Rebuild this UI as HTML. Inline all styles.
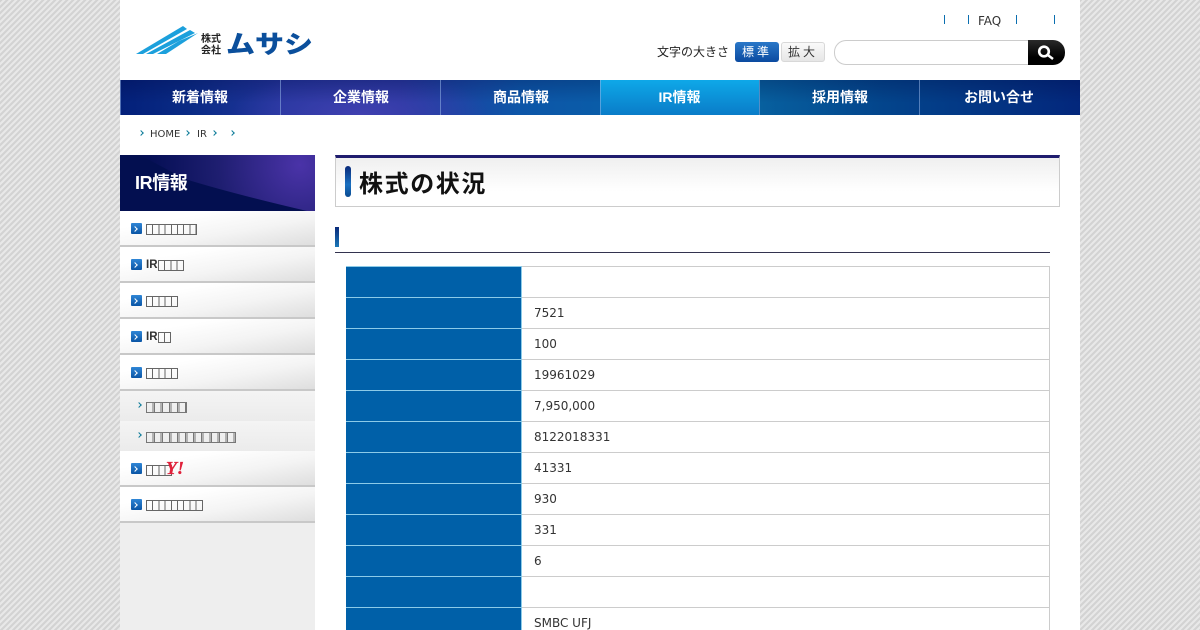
<!DOCTYPE html>
<html lang="ja"><head><meta charset="utf-8"><title>株式の状況</title>
<style>
html,body{margin:0;padding:0}
body{width:1200px;height:630px;overflow:hidden;position:relative;font-family:"DejaVu Sans",sans-serif;color:#333;
background:repeating-linear-gradient(135deg,#d3d3d3 0,#d3d3d3 2.12px,#e8e8e8 2.12px,#e8e8e8 4.24px)}
#w,#w div,#w span.a,#w svg{position:absolute}
#w{left:120px;top:0;width:960px;height:630px;background:#fff;overflow:hidden}
.cjk{font-family:"Liberation Sans","Noto Sans CJK JP",sans-serif}
.nav{top:80px;height:35px;line-height:34px;text-align:center;color:#fff;font-size:14px;font-weight:bold;font-family:"Liberation Sans","Noto Sans CJK JP",sans-serif}
.sep{top:80px;width:1px;height:35px;background:rgba(150,180,230,.55)}
.tick{top:15px;width:1px;height:9px;background:#0b6fb0}
.crumb{top:129px;font-size:10px;line-height:12px;color:#333}
.item{left:0;width:195px;height:34px;background:linear-gradient(170deg,#fff 25%,#f4f4f4 60%,#dedede 100%);border-bottom:2px solid #c8c8c8}
.sub{left:0;width:195px;height:30px;background:linear-gradient(#f4f4f4,#ebebeb);border-bottom:1px solid #ddd}
.ic{left:11px;width:11px;height:11px;background:linear-gradient(#2f86d6,#0a55a5);border-radius:1px;color:#fff}
.ic:after{content:"";position:absolute;left:2px;top:3.5px;width:3px;height:3px;border:solid #fff;border-width:1.5px 1.5px 0 0;transform:rotate(45deg)}
.tf{height:11px;border:1px solid #666;box-sizing:border-box;background:repeating-linear-gradient(90deg,transparent 0,transparent 5.2px,#666 5.2px,#666 6.2px)}
.tf2{height:11px;border:1px solid #777;box-sizing:border-box;background:repeating-linear-gradient(90deg,transparent 0,transparent 5.6px,#777 5.6px,#777 6.6px,transparent 6.6px,transparent 7.1px,#777 7.1px,#777 8.1px)}
.ir{font-size:11.5px;font-weight:bold;line-height:14px;color:#333;left:26px;font-family:"Liberation Sans",sans-serif}
.th{left:226px;width:175px;height:30px;background:#0060a8;border-top:1px solid #8ccbe8;border-right:1px solid #8ccbe8}
.td{left:402px;width:527px;height:30px;border-top:1px solid #ccc;border-right:1px solid #ccc;font-size:12px;line-height:30px;text-indent:12px;color:#333}
.ch{width:3px;height:3px;border:solid #0a7a98;border-width:1.6px 1.6px 0 0;transform:rotate(45deg)}
</style></head><body>
<div id="w">
<!-- logo -->
<svg style="left:15px;top:24px" width="180" height="34" viewBox="0 0 180 34">
<polygon points="1,30 48,2 52,5 8,30" fill="#1ca0dc"/>
<polygon points="11,30 55,6 60,9 18,30" fill="#1ca0dc"/>
<polygon points="22,30 44,17 63,9 31,30" fill="#1ca0dc"/>
<text x="66" y="18" font-size="10" font-weight="bold" fill="#222" font-family="Noto Sans CJK JP,sans-serif">株式</text>
<text x="66" y="29.5" font-size="10" font-weight="bold" fill="#222" font-family="Noto Sans CJK JP,sans-serif">会社</text>
<text x="91" y="29" font-size="25" font-weight="900" fill="#0b4f9c" font-family="Noto Sans CJK JP,sans-serif" textLength="87" lengthAdjust="spacingAndGlyphs">ムサシ</text>
</svg>
<div class="tick" style="left:824px"></div><div class="tick" style="left:848px"></div><div class="tick" style="left:896px"></div><div class="tick" style="left:934px"></div>
<div style="left:858px;top:14px;font-size:12px;line-height:15px;color:#333">FAQ</div>
<div class="cjk" style="left:537px;top:43px;font-size:12px;line-height:18px;color:#222">文字の大きさ</div>
<div class="cjk" style="left:615px;top:42px;width:44px;height:20px;border-radius:3px;background:linear-gradient(#2a78c8,#0b4aa0);color:#fff;font-size:12px;line-height:20px;text-align:center;letter-spacing:3px">標準</div>
<div class="cjk" style="left:661px;top:42px;width:42px;height:18px;border:1px solid #d8d8d8;border-radius:3px;background:linear-gradient(#fafafa,#e6e6e6);color:#333;font-size:12px;line-height:19px;text-align:center;letter-spacing:3px">拡大</div>
<div style="left:714px;top:40px;width:194px;height:23px;border:1px solid #ccc;border-right:0;border-radius:12px 0 0 12px;background:#fff"></div>
<div style="left:908px;top:40px;width:37px;height:25px;background:linear-gradient(#2a2a2a,#000 70%);border-radius:0 12px 12px 0"></div>
<svg style="left:917px;top:44px" width="20" height="18" viewBox="0 0 20 18"><circle cx="7" cy="7.5" r="4.8" fill="none" stroke="#fff" stroke-width="2.6"/><path d="M10.8 11L16 15" stroke="#fff" stroke-width="2.4"/></svg>
<!-- nav -->
<div style="left:0;top:80px;width:960px;height:35px;background:linear-gradient(rgba(0,0,50,.22),rgba(0,0,50,0) 65%),radial-gradient(ellipse 130px 45px at 240px 35px,#4040b0 0,rgba(64,64,176,0) 100%),linear-gradient(90deg,#03207a 0,#0a2b85 70px,#22359c 160px,#24379e 280px,#0d56a8 400px,#0a5ca8 480px,#07609f 640px,#03458c 760px,#03277c 960px)"></div>
<div style="left:480px;top:80px;width:159px;height:35px;background:linear-gradient(#0ea8e8,#0a7cc8)"></div>
<div class="sep" style="left:0"></div><div class="sep" style="left:160px"></div><div class="sep" style="left:320px"></div><div class="sep" style="left:480px"></div><div class="sep" style="left:639px"></div><div class="sep" style="left:799px"></div>
<div class="nav" style="left:0;width:160px">新着情報</div>
<div class="nav" style="left:161px;width:160px">企業情報</div>
<div class="nav" style="left:321px;width:160px">商品情報</div>
<div class="nav" style="left:480px;width:159px">IR情報</div>
<div class="nav" style="left:640px;width:160px">採用情報</div>
<div class="nav" style="left:799px;width:160px">お問い合せ</div>
<!-- breadcrumb -->
<div class="ch" style="left:19px;top:131px"></div><div class="crumb" style="left:30px">HOME</div>
<div class="ch" style="left:65px;top:131px"></div><div class="crumb" style="left:77px">IR</div>
<div class="ch" style="left:92px;top:131px"></div>
<div class="ch" style="left:110px;top:131px"></div>
<!-- sidebar -->
<div style="left:0;top:155px;width:195px;height:475px;background:#eee"></div>
<svg style="left:0;top:155px" width="195" height="56" viewBox="0 0 195 56"><defs><radialGradient id="g" cx="180" cy="10" r="150" gradientUnits="userSpaceOnUse"><stop offset="0" stop-color="#4a33a8"/><stop offset=".55" stop-color="#1e1e70"/><stop offset="1" stop-color="#050f55"/></radialGradient></defs><rect width="195" height="56" fill="#030f50"/><path d="M20 0H195V56H187Q110 38 65 24Z" fill="url(#g)"/></svg>
<div class="cjk" style="left:15px;top:170px;font-size:18px;line-height:26px;color:#fff;font-weight:bold;letter-spacing:-.4px">IR情報</div>

<div class="item" style="top:211px"></div><div class="ic" style="top:223px"></div><div class="tf" style="left:26px;top:224px;width:50.6px"></div>
<div class="item" style="top:247px"></div><div class="ic" style="top:259px"></div><div class="ir" style="top:258px">IR</div><div class="tf" style="left:38px;top:260px;width:25.8px"></div>
<div class="item" style="top:283px"></div><div class="ic" style="top:295px"></div><div class="tf" style="left:26px;top:296px;width:32px"></div>
<div class="item" style="top:319px"></div><div class="ic" style="top:331px"></div><div class="ir" style="top:330px">IR</div><div class="tf" style="left:38px;top:332px;width:13.4px"></div>
<div class="item" style="top:355px"></div><div class="ic" style="top:367px"></div><div class="tf" style="left:26px;top:368px;width:32px"></div>
<div class="sub" style="top:391px"></div><div class="ch" style="left:17px;top:403px"></div><div class="tf2" style="left:26px;top:402px;width:40.5px"></div>
<div class="sub" style="top:421px"></div><div class="ch" style="left:17px;top:433px"></div><div class="tf2" style="left:26px;top:432px;width:89.6px"></div>
<div class="item" style="top:451px"></div><div class="ic" style="top:463px"></div><div class="tf" style="left:26px;top:465px;width:25.8px"></div>
<div style="left:46px;top:459px;font-family:'Liberation Serif',serif;font-style:italic;font-weight:bold;font-size:18px;line-height:18px;color:#e0203a;-webkit-text-stroke:.3px #e0203a">Y!</div>
<div class="item" style="top:487px"></div><div class="ic" style="top:499px"></div><div class="tf" style="left:26px;top:500px;width:56.8px"></div>
<!-- heading -->
<div style="left:215px;top:155px;width:723px;height:48px;border:1px solid #ccc;border-top:3px solid #1f1c6e;background:linear-gradient(#efefef,#fff 70%)"></div>
<div style="left:225px;top:166px;width:6px;height:31px;border-radius:3px;background:linear-gradient(#0a2a7a,#1a70c0 60%,#0a4a90)"></div>
<div style="left:239px;top:165px;font-family:'Noto Sans CJK JP',sans-serif;font-weight:bold;font-size:24px;line-height:34px;letter-spacing:1.6px;color:#111">株式の状況</div>
<div style="left:215px;top:227px;width:4px;height:20px;background:linear-gradient(#0a2a7a,#1a78b8)"></div>
<div style="left:215px;top:252px;width:715px;height:1px;background:#33334f"></div>
<!-- table -->
<div class="th" style="top:266px"></div><div class="td" style="top:266px"></div>
<div class="th" style="top:297px"></div><div class="td" style="top:297px">7521</div>
<div class="th" style="top:328px"></div><div class="td" style="top:328px">100</div>
<div class="th" style="top:359px"></div><div class="td" style="top:359px">19961029</div>
<div class="th" style="top:390px"></div><div class="td" style="top:390px">7,950,000</div>
<div class="th" style="top:421px"></div><div class="td" style="top:421px">8122018331</div>
<div class="th" style="top:452px"></div><div class="td" style="top:452px">41331</div>
<div class="th" style="top:483px"></div><div class="td" style="top:483px">930</div>
<div class="th" style="top:514px"></div><div class="td" style="top:514px">331</div>
<div class="th" style="top:545px"></div><div class="td" style="top:545px">6</div>
<div class="th" style="top:576px"></div><div class="td" style="top:576px"></div>
<div class="th" style="top:607px"></div><div class="td" style="top:607px">SMBC UFJ</div>
</div>
</body></html>
